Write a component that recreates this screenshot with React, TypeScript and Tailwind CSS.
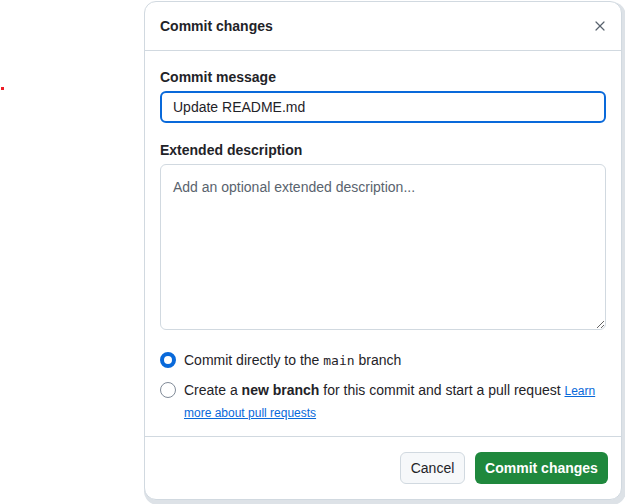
import { useState } from "react";
import { X } from "lucide-react";

export default function App() {
  const [message, setMessage] = useState("Update README.md");
  const [desc, setDesc] = useState("");
  const [target, setTarget] = useState<"direct" | "branch">("direct");

  return (
    <div className="relative w-[625px] h-[504px] bg-white overflow-hidden" style={{ fontFamily: '"Liberation Sans", Arial, sans-serif' }}>
      {/* stray marker */}
      <div className="absolute left-[1px] top-[87px] w-[3px] h-[3px] bg-[#ee1c25]" />

      <div className="ml-[144px] mt-[1px] w-[478px] h-[499px] rounded-xl bg-white border border-[#d1d9e0] shadow-[2px_3px_0_2px_#dde2e7] flex flex-col text-[#1f2328]">
        {/* Header */}
        <div className="h-[49px] flex items-center justify-between pl-[15px] pr-[9px] border-b border-[#d1d9e0]">
          <h2 className="text-sm font-semibold">Commit changes</h2>
          <button className="w-6 h-6 flex items-center justify-center text-[#59636e] cursor-pointer">
            <X size={16} strokeWidth={1.8} />
          </button>
        </div>

        {/* Body */}
        <div className="flex-1 px-[15px] pt-[16px]">
          <label className="block text-sm font-semibold mb-[4px]">Commit message</label>
          <input
            value={message}
            onChange={e => setMessage(e.target.value)}
            className="w-full h-8 px-[11px] rounded-md border-2 border-[#0969da] text-sm outline-none"
          />

          <label className="block text-sm font-semibold mt-[17px] mb-[4px]">Extended description</label>
          <textarea
            value={desc}
            onChange={e => setDesc(e.target.value)}
            placeholder="Add an optional extended description..."
            className="block w-full h-[166px] px-3 pt-[12px] rounded-md border border-[#d1d9e0] text-sm outline-none placeholder:text-[#59636e]"
          />

          <div className="mt-[20px] flex flex-col gap-[8px] text-sm">
            <label className="flex items-start gap-2 cursor-pointer" onClick={() => setTarget("direct")}>
              <span className={`mt-[2px] w-4 h-4 rounded-full shrink-0 ${target === "direct" ? "border-[4px] border-[#0969da]" : "border border-[#818b98]"}`} />
              <span>
                Commit directly to the <code className="text-[13px]" style={{ fontFamily: '"DejaVu Sans Mono", monospace' }}>main</code> branch
              </span>
            </label>
            <label className="flex items-start gap-2 cursor-pointer leading-[22px]" onClick={() => setTarget("branch")}>
              <span className={`mt-[3px] w-4 h-4 rounded-full shrink-0 ${target === "branch" ? "border-[4px] border-[#0969da]" : "border border-[#818b98]"}`} />
              <span>
                Create a <strong className="font-semibold">new branch</strong> for this commit and start a pull request{" "}
                <a href="#" className="text-xs text-[#0969da] underline">Learn more about pull requests</a>
              </span>
            </label>
          </div>
        </div>

        {/* Footer */}
        <div className="h-[63px] border-t border-[#d1d9e0] flex items-center justify-end gap-[10px] pr-[13px]">
          <button className="w-[65px] h-8 rounded-md border border-[#d1d9e0] bg-[#f6f8fa] text-sm font-medium cursor-pointer">Cancel</button>
          <button className="w-[133px] h-8 rounded-md bg-[#1f883d] text-white text-sm font-semibold cursor-pointer">Commit changes</button>
        </div>
      </div>
    </div>
  );
}
